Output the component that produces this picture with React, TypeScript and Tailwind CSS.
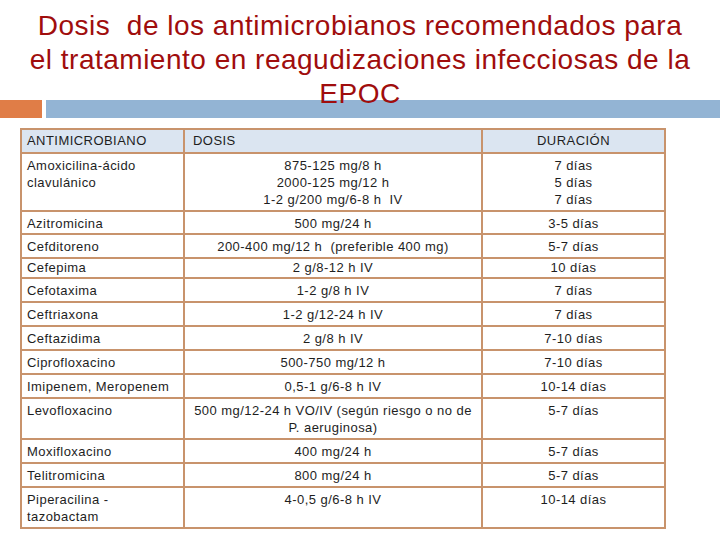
import React from "react";

type Row = {
  name: string[];
  dose: string[];
  days: string[];
  h: string;
  pt?: string;
};

const rows: Row[] = [
  { name: ["Amoxicilina-ácido", "clavulánico"], dose: ["875-125 mg/8 h", "2000-125 mg/12 h", "1-2 g/200 mg/6-8 h  IV"], days: ["7 días", "5 días", "7 días"], h: "h-[58px]" },
  { name: ["Azitromicina"], dose: ["500 mg/24 h"], days: ["3-5 días"], h: "h-[23px]" },
  { name: ["Cefditoreno"], dose: ["200-400 mg/12 h  (preferible 400 mg)"], days: ["5-7 días"], h: "h-[24px]" },
  { name: ["Cefepima"], dose: ["2 g/8-12 h IV"], days: ["10 días"], h: "h-[20px]", pt: "pt-0" },
  { name: ["Cefotaxima"], dose: ["1-2 g/8 h IV"], days: ["7 días"], h: "h-[24px]" },
  { name: ["Ceftriaxona"], dose: ["1-2 g/12-24 h IV"], days: ["7 días"], h: "h-[24px]" },
  { name: ["Ceftazidima"], dose: ["2 g/8 h IV"], days: ["7-10 días"], h: "h-[24px]" },
  { name: ["Ciprofloxacino"], dose: ["500-750 mg/12 h"], days: ["7-10 días"], h: "h-[24px]" },
  { name: ["Imipenem, Meropenem"], dose: ["0,5-1 g/6-8 h IV"], days: ["10-14 días"], h: "h-[24px]" },
  { name: ["Levofloxacino"], dose: ["500 mg/12-24 h VO/IV (según riesgo o no de", "P. aeruginosa)"], days: ["5-7 días"], h: "h-[41px]" },
  { name: ["Moxifloxacino"], dose: ["400 mg/24 h"], days: ["5-7 días"], h: "h-[24px]" },
  { name: ["Telitromicina"], dose: ["800 mg/24 h"], days: ["5-7 días"], h: "h-[24px]" },
  { name: ["Piperacilina -", "tazobactam"], dose: ["4-0,5 g/6-8 h IV"], days: ["10-14 días"], h: "h-[41px]" },
];

function Lines({ items }: { items: string[] }) {
  return (
    <>
      {items.map((t, i) => (
        <div key={i} className="whitespace-pre">
          {t}
        </div>
      ))}
    </>
  );
}

export default function App() {
  const cell = "border-2 border-[#c8936c] align-top px-[5px]";
  return (
    <div className="w-[720px] h-[540px] bg-white overflow-hidden font-[family-name:Liberation_Sans,Arial,sans-serif]">
      <div className="relative z-10 pt-[9px] text-center text-[28px] leading-[34px] tracking-[0.5px] text-[#a00d0d] whitespace-pre">
        <div>Dosis  de los antimicrobianos recomendados para</div>
        <div>el tratamiento en reagudizaciones infecciosas de la</div>
        <div>EPOC</div>
      </div>
      <div className="flex gap-[4px] mt-[-11px] h-[18px]">
        <div className="w-[42px] bg-[#e07d47]" />
        <div className="flex-1 bg-[#93b4d4]" />
      </div>
      <table className="ml-[20px] mt-[10px] w-[644px] table-fixed border-collapse text-[13px] leading-[17px] tracking-[0.45px] text-[#1e1e1e]">
        <colgroup>
          <col className="w-[163px]" />
          <col className="w-[298px]" />
          <col className="w-[183px]" />
        </colgroup>
        <thead>
          <tr className="h-[24px] bg-[#dbe5f1]">
            <th className={`${cell} pt-[2px] font-normal text-left`}>ANTIMICROBIANO</th>
            <th className={`${cell} pt-[2px] font-normal text-left pl-[8px]`}>DOSIS</th>
            <th className={`${cell} pt-[2px] font-normal text-center`}>DURACIÓN</th>
          </tr>
        </thead>
        <tbody>
          {rows.map((r, i) => {
            const pad = r.pt ?? "pt-[3px]";
            return (
              <tr key={i} className={r.h}>
                <td className={`${cell} ${pad} text-left`}>
                  <Lines items={r.name} />
                </td>
                <td className={`${cell} ${pad} text-center`}>
                  <Lines items={r.dose} />
                </td>
                <td className={`${cell} ${pad} text-center`}>
                  <Lines items={r.days} />
                </td>
              </tr>
            );
          })}
        </tbody>
      </table>
    </div>
  );
}
